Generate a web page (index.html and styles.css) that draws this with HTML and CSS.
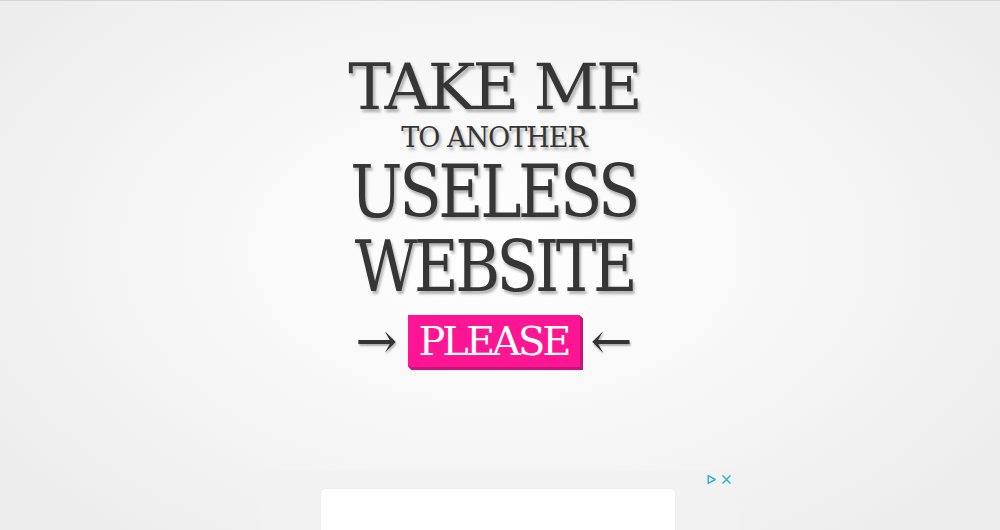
FILE: index.html
```html
<!DOCTYPE html>
<html lang="en">
<head>
<meta charset="utf-8">
<title>The Useless Web</title>
<link rel="stylesheet" href="styles.css">
</head>
<body>
<div class="topline"></div>
<main class="hero">
  <h1 class="title">
    <span class="line line-take">TAKE ME</span>
    <span class="line line-to">TO ANOTHER</span>
    <span class="line line-useless">USELESS</span>
    <span class="line line-website">WEBSITE</span>
  </h1>
  <div class="action">
    <span class="arrow">→</span>
    <a class="please" href="#">PLEASE</a>
    <span class="arrow">←</span>
  </div>
</main>
<aside class="ad">
  <div class="ad-icons">
    <svg class="ad-icon" width="11" height="11" viewBox="0 0 11 11"><path d="M2.2 1.6 L9.2 5.5 L2.2 9.4 Z" fill="none" stroke="#2cb5d4" stroke-width="1.5" stroke-linejoin="round"/></svg>
    <svg class="ad-icon" width="11" height="11" viewBox="0 0 11 11"><path d="M1.5 1.5 L9.5 9.5 M9.5 1.5 L1.5 9.5" stroke="#2cb5d4" stroke-width="1.5"/></svg>
  </div>
  <div class="ad-card"></div>
</aside>
</body>
</html>
```
FILE: styles.css
```css
html, body {
  margin: 0;
  padding: 0;
  height: 100%;
}
body {
  overflow: hidden;
  background: radial-gradient(ellipse 60% 70% at 495px 250px, #ffffff 0%, #f6f6f6 55%, #ededed 100%);
  background-color: #f2f2f2;
  font-family: "DejaVu Serif", "Liberation Serif", serif;
  color: #363636;
}
.topline {
  height: 1px;
  background: #d6d6d6;
}
.hero {
  display: flex;
  flex-direction: column;
  align-items: center;
  padding-right: 12px;
  padding-top: 54px;
}
.title {
  margin: 0;
  font-weight: normal;
  display: flex;
  flex-direction: column;
  align-items: center;
  text-shadow: 2px 3px 3px rgba(0,0,0,0.3);
}
.line {
  display: block;
  white-space: nowrap;
}
.line-take {
  font-size: 64px;
  line-height: 64px;
  letter-spacing: -3px;
}
.line-to {
  font-size: 27px;
  line-height: 27px;
  margin-top: 5px;
  letter-spacing: -1px;
}
.line-useless {
  font-size: 73px;
  line-height: 73px;
  margin-top: 4px;
  letter-spacing: -4px;
  transform: scaleX(0.85);
}
.line-website {
  font-size: 71px;
  line-height: 71px;
  margin-top: 3px;
  letter-spacing: -4px;
  transform: scaleX(0.86);
}
.action {
  display: flex;
  align-items: center;
  margin-top: 13px;
  gap: 11px;
}
.arrow {
  font-size: 50px;
  line-height: 46px;
  color: #333;
  text-shadow: 1px 2px 2px rgba(0,0,0,0.3);
}
.please {
  display: block;
  background: #fd1593;
  color: #fff;
  text-decoration: none;
  font-size: 40px;
  line-height: 52px;
  height: 52px;
  padding: 0 11px 0 10px;
  letter-spacing: -3px;
  box-shadow: 1px 1px 0 #c8137a, 2px 2px 0 #c8137a, 3px 3px 0 #c8137a;
}
.ad {
  position: relative;
  width: 475px;
  height: 120px;
  margin: 103px 0 0 262px;
  background: #f2f2f2;
}
.ad-icons {
  position: absolute;
  top: 4px;
  right: 5px;
  display: flex;
  gap: 4px;
}
.ad-card {
  position: absolute;
  left: 59px;
  top: 19px;
  width: 354px;
  height: 100px;
  background: #fff;
  border-radius: 4px;
  box-shadow: 0 0 1px rgba(0,0,0,0.15);
}
```
